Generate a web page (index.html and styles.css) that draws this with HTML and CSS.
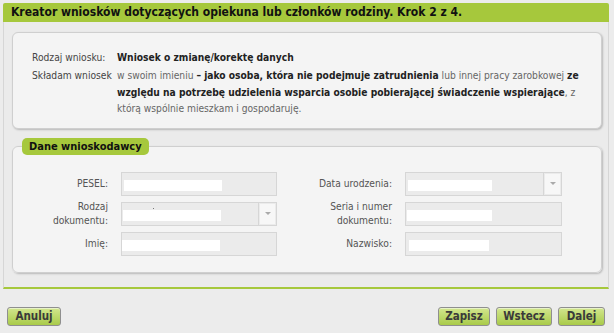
FILE: index.html
```html
<!DOCTYPE html>
<html lang="pl">
<head>
<meta charset="utf-8">
<title>Kreator wniosków</title>
<link rel="stylesheet" href="styles.css">
</head>
<body>
<div class="panel">
  <div class="panel-head">Kreator wniosków dotyczących opiekuna lub członków rodziny. Krok 2 z 4.</div>
  <div class="panel-body">
    <div class="card info">
      <div class="info-row">
        <div class="info-lbl">Rodzaj wniosku:</div>
        <div class="info-val"><b>Wniosek o zmianę/korektę danych</b></div>
      </div>
      <div class="info-row">
        <div class="info-lbl">Składam wniosek</div>
        <div class="info-val">w swoim imieniu <b>– jako osoba, która nie podejmuje zatrudnienia</b> lub innej pracy zarobkowej <b>ze</b><br><b>względu na potrzebę udzielenia wsparcia osobie pobierającej świadczenie wspierające</b>, z<br>którą wspólnie mieszkam i gospodaruję.</div>
      </div>
    </div>
    <fieldset class="card form">
      <legend class="tab">Dane wnioskodawcy</legend>
      <div class="grid">
        <label class="lbl">PESEL:</label>
        <div class="field"><span class="mask m1"></span></div>
        <label class="lbl">Data urodzenia:</label>
        <div class="field select"><span class="mask m4"></span><span class="drop"><span class="arrow"></span></span></div>

        <label class="lbl">Rodzaj<br>dokumentu:</label>
        <div class="field select"><span class="dot"></span><span class="mask m2"></span><span class="drop"><span class="arrow"></span></span></div>
        <label class="lbl">Seria i numer<br>dokumentu:</label>
        <div class="field"><span class="mask m5"></span></div>

        <label class="lbl">Imię:</label>
        <div class="field"><span class="mask m3"></span></div>
        <label class="lbl">Nazwisko:</label>
        <div class="field"><span class="mask m6"></span></div>
      </div>
    </fieldset>
  </div>
</div>
<div class="actions">
  <button class="btn">Anuluj</button>
  <div class="spacer"></div>
  <button class="btn">Zapisz</button>
  <button class="btn">Wstecz</button>
  <button class="btn">Dalej</button>
</div>
</body>
</html>
```
FILE: styles.css
```css
* { box-sizing: border-box; }
html, body { margin: 0; padding: 0; }
body {
  background: #ececec;
  font-family: "DejaVu Sans Condensed", "DejaVu Sans", sans-serif;
  font-size: 10.2px;
  color: #333;
  width: 614px;
  height: 333px;
  overflow: hidden;
}
.panel {
  margin: 3px 5px 0 3px;
}
.panel-head {
  background: #a6c83c;
  height: 19px;
  line-height: 19px;
  padding-left: 8px;
  font-weight: bold;
  font-size: 12px;
  color: #111;
  border-radius: 2px 2px 0 0;
}
.panel-body {
  border-left: 1px solid #d6d6d6;
  border-right: 1px solid #d6d6d6;
  border-bottom: 2px solid #a6c83c;
  padding: 10px 6px 14px 8px;
  background: #ebebeb;
}
.card {
  background: #f4f4f4;
  border: 1px solid #cfcfcf;
  border-radius: 6px;
  box-shadow: 1px 1px 2px rgba(0,0,0,0.22);
}
.info {
  padding: 17px 10px 10px 19px;
}
.info-row {
  display: flex;
  line-height: 16.5px;
}
.info-row + .info-row { margin-top: 1.5px; }
.info-lbl {
  width: 85px;
  flex: none;
  color: #444;
  white-space: nowrap;
}
.info-val {
  color: #666;
  white-space: nowrap;
}
.info-val b { color: #222; }

.form {
  margin: 9px 0 0 0;
  padding: 17px 0 16px 0;
  min-width: 0;
}
.tab {
  margin-left: 9px;
  padding: 0 7px;
  height: 17px;
  line-height: 17px;
  background: #a6c83c;
  border-radius: 5px;
  font-weight: bold;
  font-size: 11px;
  color: #111;
}
.grid {
  display: grid;
  grid-template-columns: 95px 156px 102px 157px;
  grid-auto-rows: 24px;
  column-gap: 13px;
  row-gap: 6px;
  align-items: center;
}
.lbl {
  text-align: right;
  color: #555;
  line-height: 14px;
  padding-left: 38px;
}
.grid .lbl:nth-child(4n+3) { padding-left: 24px; }
.field {
  position: relative;
  height: 24px;
  background: #ebebeb;
  border: 1px solid #d6d6d6;
  display: flex;
  align-items: center;
}
.mask {
  display: block;
  background: #fff;
  height: 11px;
  margin-top: 3px;
}
.m1 { margin-left: 2px; width: 98px; }
.m2 { margin-left: 1px; width: 98px; }
.m3 { margin-left: 0px; width: 98px; margin-top: 4px; }
.m4 { margin-left: 2px; width: 84px; }
.m5 { margin-left: 1px; width: 85px; }
.m6 { margin-left: 3px; width: 80px; margin-top: 4px; }
.dot {
  position: absolute;
  left: 31px;
  top: 5px;
  width: 1px;
  height: 1px;
  background: #777;
}
.select .drop {
  margin-left: auto;
  width: 18px;
  height: 22px;
  border-left: 1px solid #d6d6d6;
  padding: 1px;
}
.select .arrow {
  display: flex;
  align-items: center;
  justify-content: center;
  width: 100%;
  height: 100%;
  background: #f7f7f7;
}
.select .arrow::after {
  content: "";
  border-left: 3px solid transparent;
  border-right: 3px solid transparent;
  border-top: 3px solid #aaa;
}
.actions {
  display: flex;
  gap: 6px;
  margin: 18px 9px 0 7px;
}
.spacer { flex: 1; }
.btn {
  height: 19px;
  padding: 0 4px;
  font-family: "Liberation Sans Narrow", "DejaVu Sans Condensed", sans-serif;
  font-weight: bold;
  font-size: 11.5px;
  color: #3a3a3a;
  background: linear-gradient(#d2e68e, #a9cb4a);
  border: 1px solid #8f8f8f;
  border-radius: 3px;
  box-shadow: inset 0 1px 0 rgba(255,255,255,0.5);
}
.btn:first-child { width: 54px; }
.actions .btn:nth-child(3) { width: 52px; }
.actions .btn:nth-child(4) { width: 56px; }
.actions .btn:nth-child(5) { width: 47px; }
```
